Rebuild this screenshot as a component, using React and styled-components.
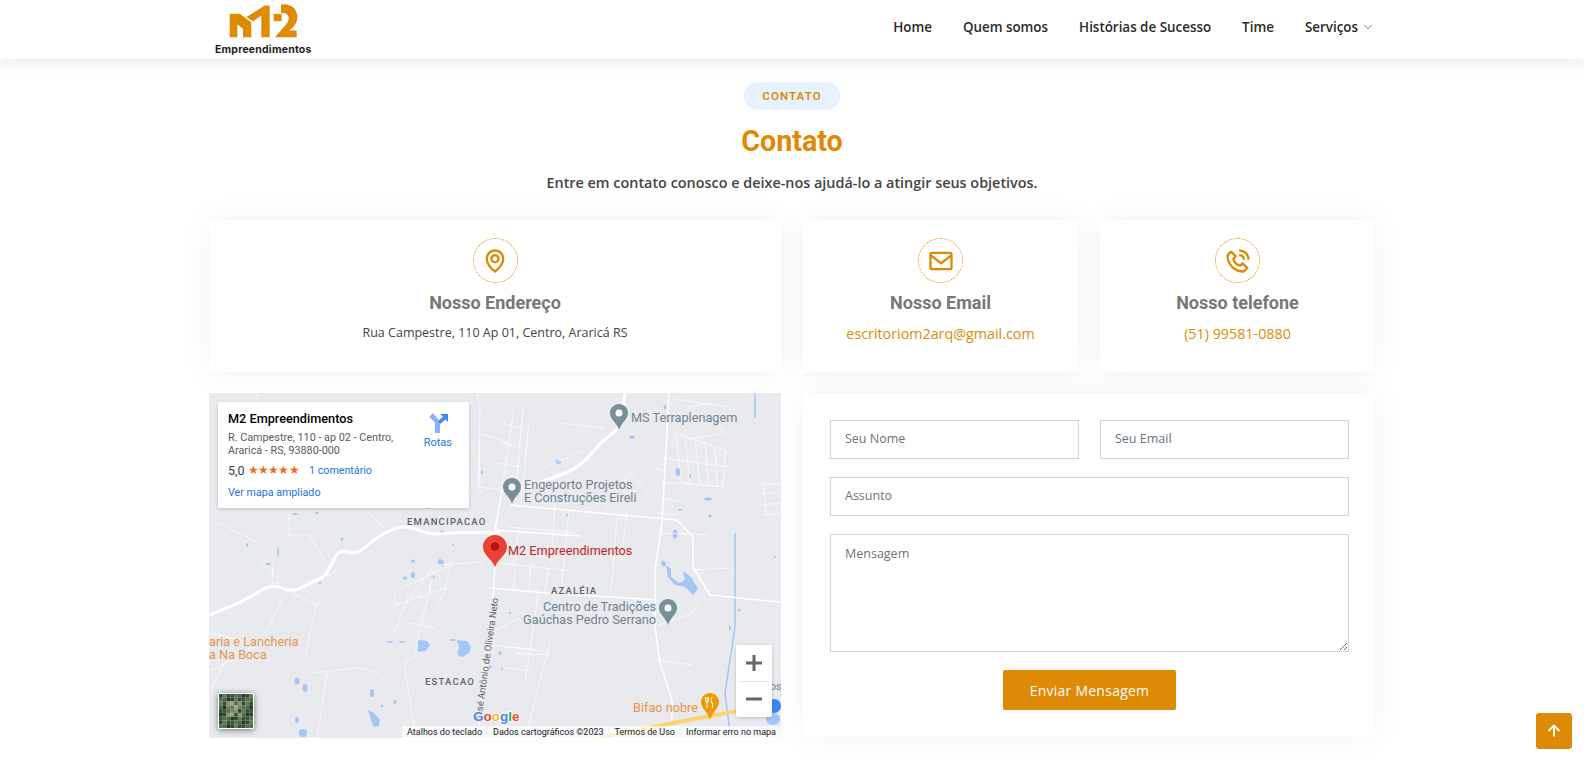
import React from "react";
import styled, { createGlobalStyle } from "styled-components";
import { BiMap, BiEnvelope, BiPhoneCall, BiUpArrowAlt } from "react-icons/bi";
import { BsChevronDown } from "react-icons/bs";

const ORANGE = "#de8a04";

const GlobalStyle = createGlobalStyle`
  * { box-sizing: border-box; }
  html, body { margin: 0; padding: 0; overflow: hidden; }
  body { font-family: "Open Sans", sans-serif; color: #444; background: #fff; }
`;

const Header = styled.header`
  height: 59px;
  background: #fff;
  box-shadow: 0 2px 15px rgba(0, 0, 0, 0.1);
`;

const HeaderInner = styled.div`
  width: 1166px;
  height: 100%;
  margin: 0 auto;
  display: flex;
  justify-content: space-between;
`;

const Logo = styled.a`
  display: flex;
  flex-direction: column;
  align-items: center;
  margin-left: 6px;
  padding-top: 2px;
`;

const LogoText = styled.span`
  font-family: Inter, sans-serif;
  font-weight: 700;
  font-size: 10.5px;
  line-height: 13px;
  margin-top: 4px;
  color: #1d1d1d;
  letter-spacing: 0.2px;
`;

const Nav = styled.nav`
  display: flex;
  align-items: center;
  gap: 31px;
  padding: 0 2px 5px 0;
`;

const NavLink = styled.a`
  display: flex;
  align-items: center;
  gap: 5px;
  font-size: 13.4px;
  font-weight: 600;
  color: #2a2a2a;
`;

const Section = styled.section`
  width: 1166px;
  margin: 0 auto;
  padding: 23px 0 24px;
`;

const SectionTitle = styled.div`
  display: flex;
  flex-direction: column;
  align-items: center;
  margin-bottom: 27px;
`;

const Pill = styled.span`
  height: 28px;
  padding: 0 18px;
  border-radius: 14px;
  background: #e7f1fd;
  color: ${ORANGE};
  font-family: Roboto, sans-serif;
  font-size: 11.5px;
  font-weight: 600;
  letter-spacing: 1.1px;
  line-height: 29px;
`;

const Title = styled.h2`
  margin: 12px 0 0;
  font-family: Roboto, sans-serif;
  font-size: 28.7px;
  font-weight: 700;
  line-height: 38px;
  color: ${ORANGE};
`;

const Subtitle = styled.p`
  margin: 13px 0 0;
  font-size: 14.4px;
  font-weight: 600;
  line-height: 20px;
  color: #444;
`;

const Grid = styled.div`
  display: grid;
  grid-template-columns: 1fr 1fr;
  gap: 21px 22px;
  align-items: start;
`;

const SubGrid = styled.div`
  display: grid;
  grid-template-columns: 1fr 1fr;
  gap: 22px;
`;

const InfoCard = styled.div`
  height: 152px;
  padding-top: 18px;
  background: #fff;
  box-shadow: 0 0 30px rgba(0, 0, 0, 0.06);
  text-align: center;
`;

const IconRing = styled.div`
  width: 45px;
  height: 45px;
  margin: 0 auto;
  display: flex;
  align-items: center;
  justify-content: center;
  border: 1px dotted ${ORANGE};
  border-radius: 50%;
  color: ${ORANGE};
  font-size: 28px;
`;

const CardTitle = styled.h3`
  margin: 8px 0 0;
  font-family: Roboto, sans-serif;
  font-size: 18px;
  font-weight: 700;
  line-height: 24px;
  color: #777;
`;

const CardText = styled.p`
  margin: 8px 0 0;
  font-size: 12.5px;
  line-height: 20px;
  color: #444;
`;

const CardLink = styled(CardText)`
  margin-top: 9px;
  font-size: 14.3px;
  color: ${ORANGE};
`;

const MapFrame = styled.div`
  position: relative;
  height: 345px;
  overflow: hidden;
  background: #e8eaed;
`;

const MapDrawing = styled.svg`
  display: block;
  width: 100%;
  height: 100%;
`;

const PlaceCard = styled.div`
  position: absolute;
  left: 9px;
  top: 9px;
  width: 251px;
  height: 106px;
  padding: 9px 10px;
  background: #fff;
  border-radius: 2px;
  box-shadow: 0 1px 4px -1px rgba(0, 0, 0, 0.3);
  font-family: Roboto, sans-serif;
`;

const PlaceName = styled.div`
  font-size: 12.7px;
  font-weight: 500;
  line-height: 15px;
  color: #000;
`;

const PlaceAddress = styled.div`
  width: 180px;
  margin-top: 5px;
  font-size: 10.8px;
  line-height: 13px;
  color: #5b5b5b;
`;

const Rating = styled.div`
  display: flex;
  align-items: center;
  margin-top: 6px;
  font-size: 12.5px;
  line-height: 15px;
  color: #3c4043;
`;

const Stars = styled.span`
  margin-left: 3px;
  color: #e7711b;
  font-size: 11.5px;
  letter-spacing: -0.7px;
`;

const PlaceLink = styled.a`
  font-size: 10.7px;
  line-height: 15px;
  color: #1a73e8;
  margin-left: ${(p) => p.$indent || 0}px;
`;

const BigMapLink = styled(PlaceLink)`
  display: block;
  margin-top: 7px;
`;

const Directions = styled.div`
  position: absolute;
  top: 10px;
  right: 17px;
  display: flex;
  flex-direction: column;
  align-items: center;
  gap: 2px;
  font-size: 11px;
  color: #1a73e8;
`;

const ZoomControl = styled.div`
  position: absolute;
  left: 527px;
  top: 252px;
  width: 36px;
  height: 72px;
  display: flex;
  flex-direction: column;
  align-items: center;
  background: #fff;
  border-radius: 2px;
  box-shadow: 0 1px 4px -1px rgba(0, 0, 0, 0.3);
`;

const ZoomButton = styled.div`
  width: 100%;
  height: 36px;
  display: flex;
  align-items: center;
  justify-content: center;
`;

const ZoomDivider = styled.div`
  width: 30px;
  height: 1px;
  background: #e6e6e6;
`;

const SatelliteThumb = styled.div`
  position: absolute;
  left: 9px;
  top: 300px;
  width: 36px;
  height: 36px;
  overflow: hidden;
  border: 1px solid #fff;
  border-radius: 2px;
  box-shadow: 0 1px 6px rgba(0, 0, 0, 0.5);
`;

const Attribution = styled.div`
  position: absolute;
  right: 0;
  bottom: 0;
  height: 12px;
  display: flex;
  align-items: center;
  font-family: Roboto, sans-serif;
  font-size: 9px;
  line-height: 12px;
  color: #222;
`;

const AttributionItem = styled.span`
  height: 12px;
  padding: 0 5px;
  background: rgba(255, 255, 255, 0.7);
  white-space: nowrap;
  border-left: 1px solid rgba(230, 230, 230, 0.6);
`;

const ContactForm = styled.form`
  padding: 27px 26px 26px 27px;
  background: #fff;
  box-shadow: 0 0 30px rgba(0, 0, 0, 0.06);
  display: flex;
  flex-direction: column;
  gap: 18px;
`;

const FormRow = styled.div`
  display: grid;
  grid-template-columns: 1fr 1fr;
  gap: 21px;
`;

const Field = styled.input`
  width: 100%;
  height: 39px;
  padding: 0 14px 3px;
  border: 1px solid #ced4da;
  border-radius: 0;
  outline: none;
  background: #fff;
  font-family: "Open Sans", sans-serif;
  font-size: 12.5px;
  color: #444;
  &::placeholder { color: #6c757d; opacity: 1; }
`;

const MessageField = styled.textarea`
  display: block;
  width: 100%;
  height: 118px;
  padding: 11px 14px;
  border: 1px solid #ced4da;
  border-radius: 0;
  outline: none;
  font-family: "Open Sans", sans-serif;
  font-size: 12.5px;
  line-height: 16px;
  color: #444;
  &::placeholder { color: #6c757d; opacity: 1; }
`;

const SubmitRow = styled.div`
  display: flex;
  justify-content: center;
`;

const SubmitButton = styled.button`
  width: 173px;
  height: 40px;
  border: 0;
  border-radius: 2px;
  background: ${ORANGE};
  color: #fff;
  font-family: "Open Sans", sans-serif;
  font-size: 14px;
  letter-spacing: 0.25px;
`;

const BackToTop = styled.a`
  position: fixed;
  right: 12px;
  bottom: 13px;
  width: 36px;
  height: 36px;
  display: flex;
  align-items: center;
  justify-content: center;
  border-radius: 3px;
  background: ${ORANGE};
  color: #fff;
  font-size: 22px;
`;

const mainRoads = [
  [[0, 222], [34, 209], [63, 190], [83, 200], [103, 189], [116, 184], [123, 170], [131, 156], [148, 162], [168, 144], [188, 134], [204, 134], [221, 142], [251, 139], [291, 140]],
  [[416, 0], [414, 20], [409, 37], [394, 47], [371, 74], [344, 85], [314, 95], [293, 97]],
];

const roads = [
  "293,97 286,137 286,174 281,247 268,345",
  "301,112 468,127 484,144 484,174 501,202 571,209",
  "281,195 338,200 448,207",
  "460,0 453,130 446,177 446,234 451,270 463,307 463,330",
  "291,140 286,137 371,143",
];

const thinRoads = [
  "268,0 271,17 269,94 291,97",
  "314,14 306,107",
  "305,14 294,90",
  "320,30 312,110",
  "294,30 314,36",
  "292,50 312,55",
  "290,70 310,74",
  "466,40 516,57 514,94 473,90 466,40",
  "476,44 481,92",
  "486,47 491,92",
  "496,50 500,93",
  "506,54 508,94",
  "455,65 520,74",
  "445,75 456,78",
  "452,90 470,90",
  "450,105 470,108",
  "449,120 468,122",
  "554,90 571,92",
  "554,100 571,100",
  "554,112 571,110",
  "554,122 571,120",
  "554,90 557,122",
  "480,46 516,40 510,35",
  "465,6 520,14",
  "480,14 500,10",
  "346,112 342,170",
  "310,135 306,168 300,172",
  "360,118 352,200",
  "408,125 402,200",
  "418,120 412,170",
  "300,134 365,140",
  "296,157 340,165",
  "335,75 372,58",
  "352,30 395,35",
  "395,120 420,80 440,100",
  "450,140 500,142",
  "484,177 520,175",
  "448,233 484,220 490,208",
  "448,267 483,272",
  "282,240 310,225",
  "281,252 332,258",
  "300,254 325,256",
  "305,260 340,262",
  "295,275 322,278",
  "316,290 330,195",
  "341,250 316,345",
  "291,170 362,178",
  "307,175 304,195",
  "322,170 320,198",
  "340,175 335,200",
  "275,169 225,172 197,209 185,240",
  "188,197 240,173",
  "186,200 187,212 236,195",
  "197,200 199,210",
  "208,197 211,205",
  "220,192 222,202",
  "225,178 204,265 195,270 207,345",
  "200,230 226,235",
  "243,168 235,200 228,215",
  "83,200 108,212 100,245 97,260",
  "73,205 60,235 35,262 0,278",
  "0,240 35,248",
  "0,300 15,270 17,268",
  "52,167 72,190 63,190",
  "63,190 64,168",
  "116,184 125,180 128,172",
  "48,0 52,30 42,60 30,100",
  "80,120 80,142 100,142 115,167",
  "160,120 175,135",
  "104,280 150,275 170,280",
  "108,345 118,280",
  "270,40 300,50",
  "270,50 271,100",
  "258,55 260,105",
  "240,60 245,108",
  "10,130 50,150",
];

const water = [
  [423, 44, 3, 1.5], [349, 69, 3, 2], [469, 79, 2.5, 4], [481, 83, 1, 2.5], [456, 14, 1.5, 2], [499, 106, 4, 1.5], [471, 117, 2, 1],
  [501, 123, 1.5, 1.5], [466, 141, 2.5, 4.5], [455, 171, 2, 2.5], [358, 122, 1, 1.5], [566, 164, 1, 1], [59, 171, 3, 1], [111, 190, 1.5, 1],
  [181, 249, 3, 1], [193, 249, 3, 1], [244, 247, 3, 1], [88, 288, 2.5, 3.5], [96, 295, 2.5, 4], [94, 340, 4, 4],
  [88, 327, 2, 3], [163, 300, 2, 4], [173, 313, 1, 1.5], [186, 309, 1.5, 2], [204, 182, 2, 3], [196, 185, 2, 1.5],
  [233, 170, 2, 3], [224, 184, 1.5, 2], [86, 121, 3, 1], [108, 120, 2, 1], [133, 146, 1.5, 1.5], [69, 159, 1, 4], [38, 152, 1, 2], [273, 79, 1, 2],
  [244, 152, 1, 1], [204, 168, 2, 1.5], [231, 169, 2, 3], [233, 139, 2, 1.5], [219, 115, 1, 1], [301, 220, 1.5, 1], [291, 260, 1.5, 2], [293, 276, 1, 1],
  [281, 274, 2, 1.5], [530, 217, 1.5, 1.5], [521, 235, 1, 3], [454, 170, 2, 2.5], [564, 326, 7, 6],
];

const lakes = [
  "M209 247L218 248 221 252 217 258 209 259Z",
  "M248 247L258 248 262 254 260 260 254 264 248 262 250 254Z",
  "M159 317L165 320 171 327 170 333 165 334 162 327Z",
  "M457 172L462 176 462 184 470 190 476 187 474 178 482 184 489 196 484 202 476 194 466 192 459 184Z",
];

const satelliteColors = ["#2f4a2e", "#4d6a45", "#3a5636", "#66785a", "#24392a", "#567048", "#31503a"];
const satelliteLight = ["#8d9270", "#a3a284", "#767f5e"];

// quadratic curves through the midpoints, so the highway bends stay round
const smoothPath = (pts) => {
  let d = `M${pts[0][0]} ${pts[0][1]}`;
  for (let i = 1; i < pts.length - 1; i++) {
    const mx = (pts[i][0] + pts[i + 1][0]) / 2;
    const my = (pts[i][1] + pts[i + 1][1]) / 2;
    d += `Q${pts[i][0]} ${pts[i][1]} ${mx} ${my}`;
  }
  const last = pts[pts.length - 1];
  return `${d}L${last[0]} ${last[1]}`;
};

const GrayPin = ({ x, y, color = "#78909c" }) => (
  <g transform={`translate(${x - 9} ${y})`}>
    <path d="M9 0C4 0 0 4 0 9c0 6.5 6.5 9 9 17 2.5-8 9-10.500 9-17C18 4 14 0 9 0Z" fill={color} />
    <circle cx="9" cy="9" r="3.500" fill="#fff" />
  </g>
);

const labelStyle = { fontFamily: "Roboto, sans-serif", fontSize: 12.7, stroke: "#e8eaed", strokeWidth: 2, paintOrder: "stroke" };
const areaStyle = { fontFamily: "Roboto, sans-serif", fontSize: 9.5, fontWeight: 500, fill: "#5f6368", letterSpacing: 1.2, stroke: "#e8eaed", strokeWidth: 2, paintOrder: "stroke" };

function MapArt() {
  return (
    <MapDrawing viewBox="0 0 572 345">
      <rect width="572" height="345" fill="#e8eaed" />
      <path d="M546 0V25M526 140V234L516 300 521 340" fill="none" stroke="#a3c5f8" strokeWidth="1.500" />
      {water.map(([cx, cy, rx, ry]) => (
        <ellipse key={`${cx}-${cy}`} cx={cx} cy={cy} rx={rx} ry={ry} fill="#a3c5f8" />
      ))}
      {lakes.map((d) => (
        <path key={d} d={d} fill="#a3c5f8" />
      ))}
      {thinRoads.map((points) => (
        <polyline key={points} points={points} fill="none" stroke="#fff" strokeWidth="0.7" />
      ))}
      {roads.map((points) => (
        <polyline key={points} points={points} fill="none" stroke="#fff" strokeWidth="1.500" strokeLinejoin="round" />
      ))}
      {mainRoads.map((pts) => (
        <path key={pts[0].join()} d={smoothPath(pts)} fill="none" stroke="#fff" strokeWidth="3" />
      ))}
      <polyline points="388,346 464,330 571,310" fill="none" stroke="#fdd36f" strokeWidth="4" />
      <polyline points="400,345 470,333" fill="none" stroke="#fff" strokeWidth="0.8" />

      <text transform="translate(272 329) rotate(-82)" fontFamily="Roboto, sans-serif" fontSize="9.500" fill="#5f6368" stroke="#e8eaed" strokeWidth="1.500" style={{ paintOrder: "stroke" }}>
        José Antônio de Oliveira Neto
      </text>
      <text x="198" y="132" style={areaStyle}>EMANCIPACAO</text>
      <text x="216" y="292" style={areaStyle}>ESTACAO</text>
      <text x="342" y="201" style={areaStyle}>AZALÉIA</text>

      <GrayPin x={410} y={11} />
      <text x="422" y="29" fill="#70838f" style={labelStyle}>MS Terraplenagem</text>
      <GrayPin x={303} y={85} />
      <text x="315" y="96" fill="#70838f" style={labelStyle}>Engeporto Projetos</text>
      <text x="315" y="109" fill="#70838f" style={labelStyle}>E Construções Eireli</text>
      <GrayPin x={459} y={206} />
      <text x="447" y="218" textAnchor="end" fill="#70838f" style={labelStyle}>Centro de Tradições</text>
      <text x="447" y="231" textAnchor="end" fill="#70838f" style={labelStyle}>Gaúchas Pedro Serrano</text>
      <text x="0" y="253" fill="#e8954a" style={labelStyle}>aria e Lancheria</text>
      <text x="0" y="266" fill="#e8954a" style={labelStyle}>a Na Boca</text>

      <g transform="translate(492 300)">
        <path d="M9 0C4 0 0 4 0 9c0 6.500 6.500 9 9 18 2.500-9 9-11.500 9-18C18 4 14 0 9 0Z" fill="#f29900" />
        <path d="M6 4v5M4.500 4v3.500a1.500 1.500 0 0 0 3 0V4M6 9v6M11.500 4c-1.500 1-1.500 4-1 6h1v5" fill="none" stroke="#fff" strokeWidth="1" />
      </g>
      <text x="489" y="319" textAnchor="end" fill="#e8954a" style={labelStyle}>Bifao nobre</text>
      <text x="561" y="297" fontFamily="Roboto, sans-serif" fontSize="10.500" fill="#70838f">os</text>
      <circle cx="565" cy="313" r="7" fill="#4285f4" />

      <g transform="translate(274 142)">
        <path d="M12 0C5.400 0 0 5.200 0 11.700c0 8.500 8.500 11.300 12 20.300 3.500-9 12-11.800 12-20.300C24 5.200 18.600 0 12 0Z" fill="#ea4335" />
        <circle cx="12" cy="11.500" r="4.300" fill="#b31412" />
      </g>
      <text x="299" y="162" fill="#c5221f" style={labelStyle}>M2 Empreendimentos</text>

      <text x="264" y="328" fontFamily="'Liberation Sans', sans-serif" fontSize="13.500" fontWeight="700" stroke="#fff" strokeWidth="1.500" style={{ paintOrder: "stroke" }}>
        <tspan fill="#4285f4">G</tspan>
        <tspan fill="#ea4335">o</tspan>
        <tspan fill="#fbbc05">o</tspan>
        <tspan fill="#4285f4">g</tspan>
        <tspan fill="#34a853">l</tspan>
        <tspan fill="#ea4335">e</tspan>
      </text>
    </MapDrawing>
  );
}

const LogoMark = () => (
  <svg viewBox="85 5 210 110" width="70" height="37">
    <path d="M90 40H120L155 65V110H130V85L113 72V110H90Z" fill={ORANGE} />
    <path d="M140 50L195 15H210V110H185V45L160 62Z" fill={ORANGE} />
    <path d="M222 40H246V62H222Z" fill={ORANGE} />
    <path d="M244 12C272 6 296 26 293 54 291 70 280 82 268 90H291V110H226L256 76C265 66 268 58 267 50 266 42 258 36 244 38Z" fill={ORANGE} />
  </svg>
);

const DirectionsIcon = () => (
  <svg width="22" height="22" viewBox="0 0 22 22">
    <path d="M2 5L6 1 11 7C12.500 9 13 11 13 13V21H8V13C8 11.500 7.800 10.500 7 9.500Z" fill="#8ab4f8" />
    <path d="M11 9L16 5 13.500 2H21V10L18.500 7.500 13 12Z" fill="#4285f4" />
  </svg>
);

const SatelliteArt = () => {
  const cells = [];
  for (let row = 0; row < 9; row++) {
    for (let col = 0; col < 9; col++) {
      const central = row > 1 && row < 6 && col > 1 && col < 6 && (row + col) % 3 !== 0;
      const fill = central
        ? satelliteLight[(row * 2 + col) % satelliteLight.length]
        : satelliteColors[(row * 5 + col * 3) % satelliteColors.length];
      cells.push(<rect key={`${row}-${col}`} x={col * 4} y={row * 4} width="4" height="4" fill={fill} />);
    }
  }
  return (
    <svg viewBox="0 0 36 36" width="34" height="34" style={{ display: "block" }}>
      {cells}
    </svg>
  );
};

function App() {
  return (
    <>
      <GlobalStyle />
      <Header>
        <HeaderInner>
          <Logo>
            <LogoMark />
            <LogoText>Empreendimentos</LogoText>
          </Logo>
          <Nav>
            <NavLink>Home</NavLink>
            <NavLink>Quem somos</NavLink>
            <NavLink>Histórias de Sucesso</NavLink>
            <NavLink>Time</NavLink>
            <NavLink>Serviços <BsChevronDown size={10} color="#555" /></NavLink>
          </Nav>
        </HeaderInner>
      </Header>

      <Section>
        <SectionTitle>
          <Pill>CONTATO</Pill>
          <Title>Contato</Title>
          <Subtitle>Entre em contato conosco e deixe-nos ajudá-lo a atingir seus objetivos.</Subtitle>
        </SectionTitle>

        <Grid>
          <InfoCard>
            <IconRing><BiMap /></IconRing>
            <CardTitle>Nosso Endereço</CardTitle>
            <CardText>Rua Campestre, 110 Ap 01, Centro, Araricá RS</CardText>
          </InfoCard>
          <SubGrid>
            <InfoCard>
              <IconRing><BiEnvelope /></IconRing>
              <CardTitle>Nosso Email</CardTitle>
              <CardLink>escritoriom2arq@gmail.com</CardLink>
            </InfoCard>
            <InfoCard>
              <IconRing><BiPhoneCall /></IconRing>
              <CardTitle>Nosso telefone</CardTitle>
              <CardLink>(51) 99581-0880</CardLink>
            </InfoCard>
          </SubGrid>

          <MapFrame>
            <MapArt />
            <PlaceCard>
              <PlaceName>M2 Empreendimentos</PlaceName>
              <PlaceAddress>R. Campestre, 110 - ap 02 - Centro, Araricá - RS, 93880-000</PlaceAddress>
              <Rating>
                5,0 <Stars>★★★★★</Stars>
                <PlaceLink $indent={10}>1 comentário</PlaceLink>
              </Rating>
              <BigMapLink>Ver mapa ampliado</BigMapLink>
              <Directions>
                <DirectionsIcon />
                Rotas
              </Directions>
            </PlaceCard>
            <ZoomControl>
              <ZoomButton>
                <svg width="18" height="18" viewBox="0 0 18 18"><path d="M1 9H17M9 1V17" stroke="#666" strokeWidth="3" /></svg>
              </ZoomButton>
              <ZoomDivider />
              <ZoomButton>
                <svg width="18" height="18" viewBox="0 0 18 18"><path d="M1 9H17" stroke="#666" strokeWidth="3" /></svg>
              </ZoomButton>
            </ZoomControl>
            <SatelliteThumb><SatelliteArt /></SatelliteThumb>
            <Attribution>
              <AttributionItem>Atalhos do teclado</AttributionItem>
              <AttributionItem>Dados cartográficos ©2023</AttributionItem>
              <AttributionItem>Termos de Uso</AttributionItem>
              <AttributionItem>Informar erro no mapa</AttributionItem>
            </Attribution>
          </MapFrame>

          <ContactForm>
            <FormRow>
              <Field placeholder="Seu Nome" />
              <Field placeholder="Seu Email" />
            </FormRow>
            <Field placeholder="Assunto" />
            <MessageField placeholder="Mensagem" />
            <SubmitRow>
              <SubmitButton type="button">Enviar Mensagem</SubmitButton>
            </SubmitRow>
          </ContactForm>
        </Grid>
      </Section>

      <BackToTop><BiUpArrowAlt /></BackToTop>
    </>
  );
}

export default App;
